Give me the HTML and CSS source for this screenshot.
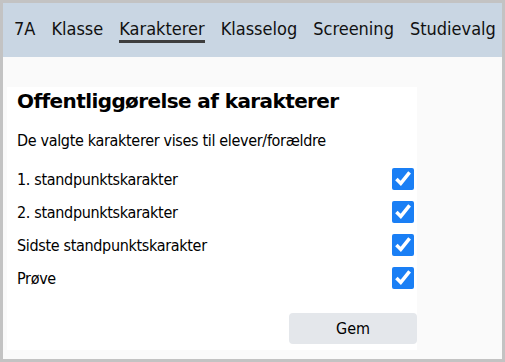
FILE: index.html
```html
<!DOCTYPE html>
<html lang="da">
<head>
<meta charset="utf-8">
<title>Karakterer</title>
<link rel="stylesheet" href="styles.css">
</head>
<body>
<div class="frame">
  <nav class="tabs">
    <a class="tab">7A</a>
    <a class="tab">Klasse</a>
    <a class="tab active">Karakterer</a>
    <a class="tab">Klasselog</a>
    <a class="tab">Screening</a>
    <a class="tab">Studievalg</a>
  </nav>
  <main class="main">
    <section class="card">
      <h1 class="title">Offentliggørelse af karakterer</h1>
      <p class="lead">De valgte karakterer vises til elever/forældre</p>
      <ul class="options">
        <li class="option"><span class="label">1. standpunktskarakter</span><input class="check" type="checkbox" checked></li>
        <li class="option"><span class="label">2. standpunktskarakter</span><input class="check" type="checkbox" checked></li>
        <li class="option"><span class="label">Sidste standpunktskarakter</span><input class="check" type="checkbox" checked></li>
        <li class="option"><span class="label">Prøve</span><input class="check" type="checkbox" checked></li>
      </ul>
      <div class="actions"><button class="btn" type="button">Gem</button></div>
    </section>
  </main>
</div>
</body>
</html>
```
FILE: styles.css
```css
html, body {
  margin: 0;
  padding: 0;
}
body {
  font-family: "DejaVu Sans Condensed", "DejaVu Sans", sans-serif;
  color: #000;
  background: #fff;
}
.frame {
  box-sizing: border-box;
  width: 505px;
  height: 362px;
  border: 3px solid #c3c3c3;
  display: flex;
  flex-direction: column;
  background: #fafafa;
}
.tabs {
  height: 54px;
  box-sizing: border-box;
  background: #c9d6e3;
  display: flex;
  align-items: flex-start;
  gap: 16px;
  padding: 15px 0 0 11px;
  font-size: 18px;
  line-height: 22px;
  white-space: nowrap;
  overflow: hidden;
}
.tab {
  color: #111;
  text-decoration: none;
  border-bottom: 3px solid transparent;
}
.tab.active {
  border-bottom-color: #3d3d3d;
}
.main {
  flex: 1;
  padding: 30px 0 0 4px;
}
.card {
  width: 410px;
  box-sizing: border-box;
  background: #fff;
  padding: 2px 0 6px 10px;
}
.title {
  margin: 0;
  font-family: "DejaVu Sans", sans-serif;
  font-size: 20px;
  line-height: 24px;
  font-weight: bold;
  letter-spacing: -0.6px;
}
.lead {
  margin: 18px 0 0;
  font-size: 16px;
  line-height: 20px;
  letter-spacing: -0.33px;
}
.options {
  list-style: none;
  margin: 11px 0 0;
  padding: 0;
}
.option {
  height: 33px;
  display: flex;
  align-items: center;
  justify-content: space-between;
  font-size: 16px;
  line-height: 20px;
  letter-spacing: -0.33px;
}
.label {
  padding-top: 3px;
}
.check {
  width: 22px;
  height: 22px;
  margin: 0 3px 0 0;
  accent-color: #1a7ff5;
}
.actions {
  display: flex;
  justify-content: flex-end;
  margin-top: 19px;
}
.btn {
  width: 128px;
  height: 31px;
  border: none;
  border-radius: 4px;
  background: #e4e7eb;
  font-family: inherit;
  font-size: 16px;
  color: #000;
  padding: 0;
}
```
